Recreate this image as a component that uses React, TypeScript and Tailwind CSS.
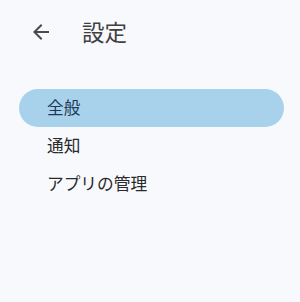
export default function App() {
  const items = ["全般", "通知", "アプリの管理"];
  return (
    <div
      className="w-[300px] h-[302px] bg-[#f8f9fd] overflow-hidden"
      style={{ fontFamily: '"Noto Sans CJK JP", "Noto Sans", sans-serif' }}
    >
      <div className="flex items-center h-[65px] pl-[29px] pb-[2px]">
        <svg width="24" height="24" viewBox="0 0 24 24" className="shrink-0">
          <path
            d="M20 11H7.83l5.59-5.59L12 4l-8 8 8 8 1.41-1.41L7.83 13H20v-2z"
            fill="#4a4a4a"
          />
        </svg>
        <div className="ml-[29px] text-[22.5px] leading-none text-[#404040]">設定</div>
      </div>
      <div className="mt-[24px] flex flex-col">
        {items.map((t, i) => (
          <div
            key={t}
            className={
              i === 0
                ? "ml-[19px] w-[265px] h-[38px] rounded-full bg-[#a8d1ec] flex items-center pl-[28px] text-[16.7px] text-[#1c3a55]"
                : "ml-[19px] w-[265px] h-[38px] rounded-full flex items-center pl-[28px] text-[16.7px] text-[#2a2a2a]"
            }
          >
            {t}
          </div>
        ))}
      </div>
    </div>
  );
}
